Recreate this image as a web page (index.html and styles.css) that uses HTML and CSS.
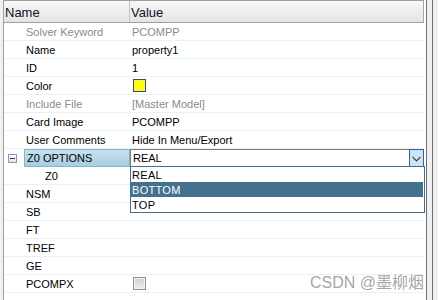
FILE: index.html
```html
<!DOCTYPE html>
<html>
<head>
<meta charset="utf-8">
<link rel="stylesheet" href="styles.css">
</head>
<body>
<div class="frame">
  <div class="grid">
    <div class="header">
      <div class="hcell hname">Name</div>
      <div class="hcell hvalue">Value</div>
    </div>
    <div class="row"><div class="name muted">Solver Keyword</div><div class="value muted">PCOMPP</div></div>
    <div class="row"><div class="name">Name</div><div class="value">property1</div></div>
    <div class="row"><div class="name">ID</div><div class="value">1</div></div>
    <div class="row"><div class="name">Color</div><div class="value"><span class="swatch"></span></div></div>
    <div class="row"><div class="name muted">Include File</div><div class="value muted">[Master Model]</div></div>
    <div class="row"><div class="name">Card Image</div><div class="value">PCOMPP</div></div>
    <div class="row"><div class="name">User Comments</div><div class="value">Hide In Menu/Export</div></div>
    <div class="row open">
      <div class="expander"><span class="minus-box"><span class="minus"></span></span></div>
      <div class="sel-name">Z0 OPTIONS</div>
      <div class="combo">
        <div class="combo-text">REAL</div>
        <div class="combo-btn"><svg width="9" height="6" viewBox="0 0 9 6"><path d="M0.5 0.8 L4.5 4.8 L8.5 0.8" fill="none" stroke="#3c3c3c" stroke-width="1.2"/></svg></div>
      </div>
    </div>
    <div class="row"><div class="name sub">Z0</div><div class="value"></div></div>
    <div class="row"><div class="name">NSM</div><div class="value"></div></div>
    <div class="row"><div class="name">SB</div><div class="value"></div></div>
    <div class="row"><div class="name">FT</div><div class="value"></div></div>
    <div class="row"><div class="name">TREF</div><div class="value"></div></div>
    <div class="row"><div class="name">GE</div><div class="value"></div></div>
    <div class="row"><div class="name">PCOMPX</div><div class="value"><span class="check"></span></div></div>
    <div class="list">
      <div class="item">REAL</div>
      <div class="item hl">BOTTOM</div>
      <div class="item">TOP</div>
    </div>
    <div class="watermark">CSDN @墨柳烟</div>
  </div>
  <div class="sep"></div>
  <div class="gap"></div>
  <div class="sep"></div>
</div>
</body>
</html>
```

FILE: styles.css
```css
html, body {
  margin: 0;
  padding: 0;
}
body {
  width: 438px;
  height: 300px;
  overflow: hidden;
  background: #f0f0f0;
  font-family: "Liberation Sans", Arial, sans-serif;
  font-size: 11px;
  color: #000;
}
.frame {
  display: flex;
  height: 300px;
}
.grid {
  position: relative;
  margin-left: 3px;
  border-left: 1px solid #a0a0a0;
  width: 422px;
  height: 300px;
  background: #fff;
}
.header {
  display: flex;
  width: 419px;
  height: 21px;
  border-top: 1px solid #a0a0a0;
  border-bottom: 1px solid #a0a0a0;
  border-right: 1px solid #a8a8a8;
  box-sizing: content-box;
  background: linear-gradient(#f8f8f8, #e4e4e4);
}
.hcell {
  font-size: 13px;
  line-height: 21px;
  color: #10102a;
  padding-top: 1px;
  box-sizing: border-box;
}
.hname {
  width: 126px;
  padding-left: 1px;
  border-right: 1px solid #c4c4c4;
}
.hvalue {
  flex: 1;
  padding-left: 1px;
}
.row {
  display: flex;
  width: 420px;
  height: 17px;
  border-bottom: 1px solid #e6f2f8;
  line-height: 18px;
}
.name {
  width: 126px;
  padding-left: 22px;
  box-sizing: border-box;
  white-space: nowrap;
}
.name.sub {
  padding-left: 41px;
}
.value {
  flex: 1;
  padding-left: 2px;
  display: flex;
  align-items: center;
  white-space: nowrap;
}
.muted {
  color: #8a8a8a;
}
.swatch {
  display: block;
  width: 11px;
  height: 11px;
  margin-left: 1px;
  border: 1px solid #4a4a4a;
  background: #ffff00;
  box-shadow: inset 0 0 0 1px #f2f27a;
}
.check {
  display: block;
  width: 11px;
  height: 11px;
  margin-left: 1px;
  border: 1px solid #8e8f8f;
  background: linear-gradient(#cfcfcf, #ededed);
  box-shadow: inset 0 0 0 1px #f4f4f4;
}
.row.open {
  height: 18px;
  border-bottom: none;
  line-height: 17px;
}
.expander {
  width: 20px;
  display: flex;
  align-items: center;
  padding-left: 4px;
  box-sizing: border-box;
}
.minus-box {
  display: flex;
  align-items: center;
  justify-content: center;
  width: 7px;
  height: 7px;
  border: 1px solid #8d96aa;
  background: linear-gradient(#fdfdfd, #e2e4ea);
}
.minus {
  width: 5px;
  height: 1px;
  background: #2a3a6a;
}
.sel-name {
  width: 106px;
  box-sizing: border-box;
  border: 1px solid #87b3cb;
  background: linear-gradient(#c8e1ee, #a7cde1);
  padding-left: 2px;
  white-space: nowrap;
}
.combo {
  flex: 1;
  display: flex;
  height: 18px;
}
.combo-text {
  flex: 1;
  border: 1px solid #7a7a7a;
  border-right: none;
  padding-left: 2px;
  background: #fff;
}
.combo-btn {
  width: 13px;
  border: 1px solid #2f6299;
  background: #cde4f7;
  display: flex;
  align-items: center;
  justify-content: center;
  padding-top: 2px;
  box-sizing: content-box;
}
.list {
  position: absolute;
  left: 126px;
  top: 166px;
  width: 292px;
  border: 1px solid #3f6f8c;
  background: #fff;
  padding-right: 1px;
}
.item {
  height: 15px;
  line-height: 16px;
  padding-left: 1px;
  letter-spacing: 0.3px;
}
.item.hl {
  background: #43718f;
  color: #fff;
}
.watermark {
  position: absolute;
  right: 2px;
  bottom: 7px;
  font-family: "Liberation Sans", "Noto Sans CJK SC", sans-serif;
  font-size: 16px;
  color: rgba(140, 140, 140, 0.8);
  white-space: nowrap;
}
.sep {
  width: 1px;
  background: #6e6e6e;
}
.gap {
  width: 5px;
}
```
